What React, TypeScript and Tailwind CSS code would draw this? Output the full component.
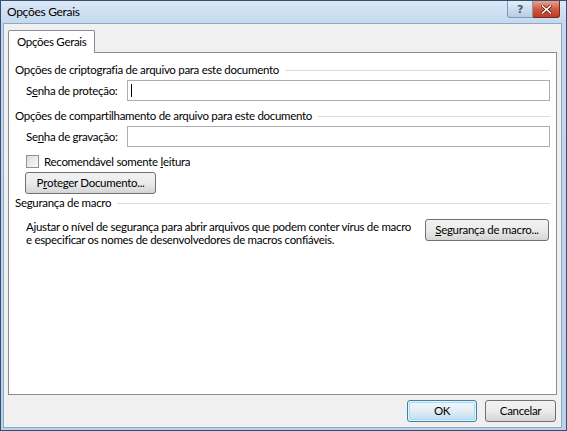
import React from "react";

function SectionHeader({ children }: { children: React.ReactNode }) {
  return (
    <div className="flex items-center h-[16px]">
      <span className="whitespace-nowrap">{children}</span>
      <div className="flex-1 ml-[6px] h-px bg-[#dcdcdc]" />
    </div>
  );
}

function Button({ children, className = "" }: { children: React.ReactNode; className?: string }) {
  return (
    <div
      className={
        "h-[22px] shrink-0 flex items-center justify-center whitespace-nowrap rounded-[3px] border border-[#707070] bg-gradient-to-b from-[#f2f2f2] via-[#ebebeb] to-[#d5d5d5] text-black " +
        className
      }
    >
      {children}
    </div>
  );
}

export default function App() {
  return (
    <div className="w-[567px] h-[431px] flex flex-col bg-gradient-to-b from-[#c6d9ee] to-[#b9d1ea] border border-[#34506e] font-['Lato','Noto_Sans',sans-serif] text-[11.5px] tracking-[-0.3px] leading-none text-black overflow-hidden">
      {/* Title bar */}
      <div className="h-[22px] flex items-center justify-between pl-[6px] pr-[6px] bg-gradient-to-b from-[#dbe8f6] to-[#c4d8ee]">
        <span className="text-[12px] text-black whitespace-nowrap">Opções Gerais</span>
        <div className="flex items-start self-start">
          <div className="w-[26px] h-[17px] flex items-center justify-center rounded-bl-[3px] border border-[#7e9ab8] border-t-0 bg-gradient-to-b from-[#e3edf8] to-[#b9cde5]">
            <span className="text-[11px] font-bold text-[#4a5a6e] font-['DejaVu_Sans',sans-serif]">?</span>
          </div>
          <div className="w-[27px] h-[17px] flex items-center justify-center rounded-br-[3px] border border-[#7a2a1c] border-t-0 border-l-0 bg-gradient-to-b from-[#e8a493] via-[#cf5a3f] to-[#c13b22]">
            <svg width="11" height="9" viewBox="0 0 11 9">
              <path d="M1.5 1 L9.5 8 M9.5 1 L1.5 8" stroke="#5a1a10" strokeWidth="3" strokeLinecap="square" />
              <path d="M1.5 1 L9.5 8 M9.5 1 L1.5 8" stroke="#ffffff" strokeWidth="1.6" strokeLinecap="square" />
            </svg>
          </div>
        </div>
      </div>

      {/* Body */}
      <div className="flex-1 ml-[2px] mr-[4px] mb-[2px] bg-[#f0f0f0] border border-[#8fa8c4] flex flex-col px-[4px] pt-[6px]">
        {/* Tab header */}
        <div className="flex">
          <div className="w-[87px] h-[23px] bg-white border border-[#898c95] border-b-0 rounded-t-[2px] flex items-center pl-[8px] -mb-px relative z-10 whitespace-nowrap">
            Opções Gerais
          </div>
        </div>
        {/* Tab panel */}
        <div className="h-[343px] bg-white border border-[#898c95] pl-[6px] pr-[6px] pt-[9px] flex flex-col">
          <SectionHeader>Opções de criptografia de arquivo para este documento</SectionHeader>
          <div className="flex items-center mt-[2px] pl-[11px]">
            <span className="w-[101px] shrink-0 whitespace-nowrap">
              S<span className="underline">e</span>nha de proteção:
            </span>
            <div className="flex-1 h-[21px] border border-[#abadb3] bg-white flex items-center pl-[3px]">
              <div className="w-px h-[13px] bg-black" />
            </div>
          </div>
          <div className="mt-[7px]">
            <SectionHeader>Opções de compartilhamento de arquivo para este documento</SectionHeader>
          </div>
          <div className="flex items-center mt-[2px] pl-[11px]">
            <span className="w-[101px] shrink-0 whitespace-nowrap">
              Se<span className="underline">n</span>ha de gravação:
            </span>
            <div className="flex-1 h-[21px] border border-[#abadb3] bg-white" />
          </div>
          <div className="flex items-center mt-[8px] pl-[11px]">
            <div className="w-[13px] h-[13px] border border-[#8e8f8f] bg-gradient-to-br from-[#dcdcdc] to-[#fbfbfb]" />
            <span className="ml-[5px] whitespace-nowrap">
              Recomendável somente <span className="underline">l</span>eitura
            </span>
          </div>
          <div className="flex mt-[4px] pl-[10px]">
            <Button className="w-[131px]">
              P<span className="underline">r</span>oteger Documento...
            </Button>
          </div>
          <div className="mt-[1px]">
            <SectionHeader>Segurança de macro</SectionHeader>
          </div>
          <div className="flex items-start mt-[8px] pl-[11px] pr-[1px]">
            <div className="flex-1 min-w-0 leading-[13px] pt-[1px] whitespace-nowrap">
              <div>Ajustar o nível de segurança para abrir arquivos que podem conter vírus de macro</div>
              <div>e especificar os nomes de desenvolvedores de macros confiáveis.</div>
            </div>
            <Button className="w-[124px] ml-[8px]">
              <span className="underline">S</span>egurança de macro...
            </Button>
          </div>
        </div>
        {/* Footer buttons */}
        <div className="flex justify-end gap-[8px] mt-[5px] pr-[1px]">
          <div className="w-[70px] h-[22px] rounded-[3px] border border-[#3c7fb1] p-px">
            <div className="w-full h-full rounded-[2px] border border-[#9ee0f9] bg-gradient-to-b from-[#f0f6fa] via-[#e1eef6] to-[#c6dfee] flex items-center justify-center">
              OK
            </div>
          </div>
          <Button className="w-[71px]">Cancelar</Button>
        </div>
      </div>
    </div>
  );
}
